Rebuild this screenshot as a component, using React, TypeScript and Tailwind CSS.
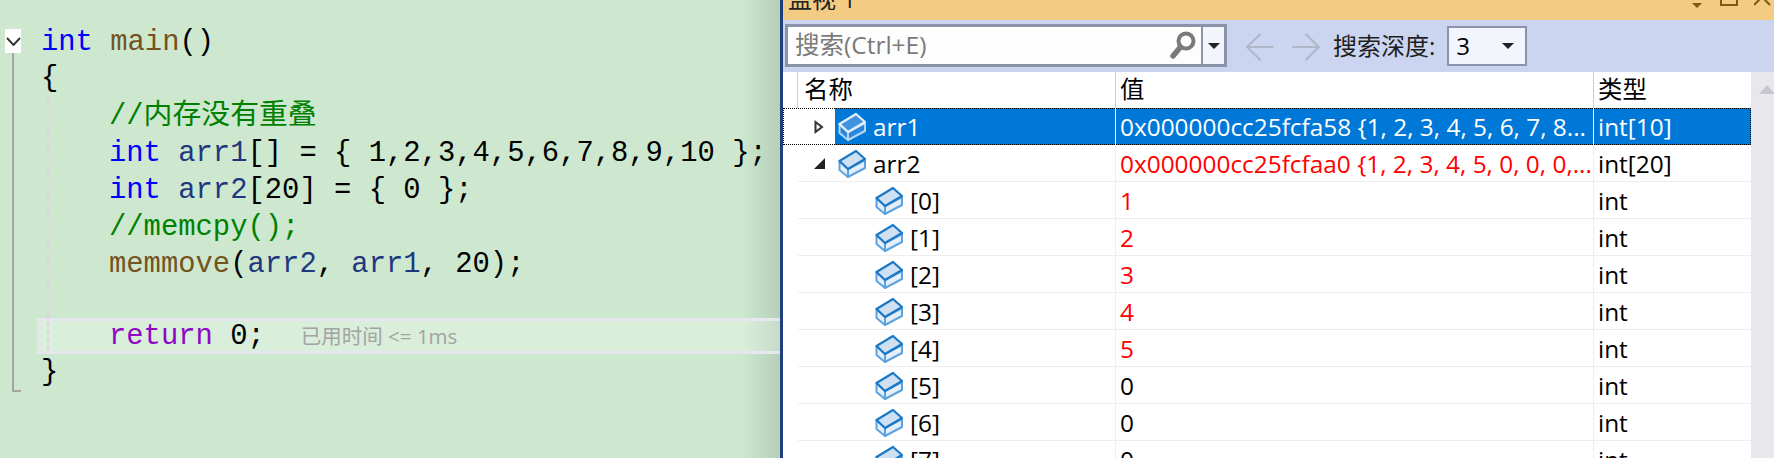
import { ArrowLeft, ArrowRight } from "lucide-react"

const uiFont = "font-['Open_Sans','Noto_Sans_CJK_SC',sans-serif]"
const codeFont = "font-['Liberation_Mono','Noto_Sans_CJK_SC',monospace]"

function VarIcon({ selected = false }: { selected?: boolean }) {
  const top = selected ? "#3f93e0" : "#cfe0f3"
  const side = selected ? "#2b86dc" : "#e6eff9"
  const strokeA = selected ? "#e4f0fb" : "#1a78c6"
  const strokeB = selected ? "#b5d7f5" : "#5aa3e0"
  return (
    <svg width="28" height="29" viewBox="0 0 28 29" fill="none" className="shrink-0">
      <path d="M1.5 12 L10 20 V28 L1.5 21 Z" fill={side} stroke={strokeB} strokeWidth="2" strokeLinejoin="round" />
      <path d="M10 20 L27 11 V19 L10 28 Z" fill={side} stroke={strokeB} strokeWidth="2" strokeLinejoin="round" />
      <path d="M1.5 12 L18 2 L27 10 L10 20 Z" fill={top} stroke={strokeA} strokeWidth="2.2" strokeLinejoin="round" />
    </svg>
  )
}

type RowData = {
  name: string
  value: string
  type: string
  changed?: boolean
  selected?: boolean
  depth?: number
  arrow?: "open" | "closed"
}

const rows: RowData[] = [
  { name: "arr1", value: "0x000000cc25fcfa58 {1, 2, 3, 4, 5, 6, 7, 8...", type: "int[10]", selected: true, arrow: "closed" },
  { name: "arr2", value: "0x000000cc25fcfaa0 {1, 2, 3, 4, 5, 0, 0, 0,...", type: "int[20]", changed: true, arrow: "open" },
  { name: "[0]", value: "1", type: "int", changed: true, depth: 1 },
  { name: "[1]", value: "2", type: "int", changed: true, depth: 1 },
  { name: "[2]", value: "3", type: "int", changed: true, depth: 1 },
  { name: "[3]", value: "4", type: "int", changed: true, depth: 1 },
  { name: "[4]", value: "5", type: "int", changed: true, depth: 1 },
  { name: "[5]", value: "0", type: "int", depth: 1 },
  { name: "[6]", value: "0", type: "int", depth: 1 },
  { name: "[7]", value: "0", type: "int", depth: 1 },
]

function WatchRow({ row }: { row: RowData }) {
  const sel = row.selected
  const border = sel ? "" : "border-b border-[#eeeeee]"
  return (
    <div className={`flex h-[37px] shrink-0 text-[24.4px] leading-[37px] ${sel ? "outline-1 -outline-offset-1 outline-dotted outline-black" : ""}`}>
      <div className="w-[15px] shrink-0" />
      <div className={`flex w-[317px] shrink-0 ${border}`}>
        <div className={`flex shrink-0 items-center pl-[16px] ${row.depth ? "w-[74px]" : "w-[37px]"}`}>
          {row.arrow === "closed" && (
            <svg width="10" height="14" viewBox="0 0 10 14">
              <path d="M1.5 2 L8 7 L1.5 12 Z" fill="none" stroke="#333" strokeWidth="2" />
            </svg>
          )}
          {row.arrow === "open" && (
            <svg width="11" height="11" viewBox="0 0 11 11">
              <path d="M11 0 V11 H0 Z" fill="#222" />
            </svg>
          )}
        </div>
        <div className={`flex flex-1 items-center gap-[7px] pl-[3px] ${sel ? "bg-[#0078d7] text-white" : "text-black"}`}>
          <VarIcon selected={sel} />
          <span>{row.name}</span>
        </div>
      </div>
      <div className={`w-[478px] shrink-0 overflow-hidden whitespace-nowrap border-l pl-[4px] ${sel ? "border-white bg-[#0078d7] text-white" : `border-[#eeeeee] ${row.changed ? "text-[#ff0000]" : "text-black"}`} ${border}`}>
        {row.value}
      </div>
      <div className={`w-[158px] shrink-0 border-l pl-[4px] ${sel ? "border-white bg-[#0078d7] text-white" : "border-[#eeeeee] text-black"} ${border}`}>
        {row.type}
      </div>
    </div>
  )
}

function Editor() {
  const guide = "border-l-2 border-dashed border-[#dcd5de] pl-[60px]"
  return (
    <div className={`flex h-[458px] w-[780px] shrink-0 bg-linear-to-r from-[#cde8cf] from-95% to-[#b6cfb9] text-[28.85px] leading-[37px] text-black ${codeFont}`}>
      <div className="flex w-[37px] shrink-0 flex-col pl-[5px] pt-[29px]">
        <div className="flex h-[24px] w-[16px] items-center justify-center bg-white">
          <svg width="15" height="9" viewBox="0 0 15 9">
            <path d="M1 1 L7.5 8 L14 1" fill="none" stroke="#333" strokeWidth="1.9" />
          </svg>
        </div>
        <div className="ml-[7px] h-[339px] w-[9px] border-b-[2px] border-l-[2px] border-[#a5a5a5]" />
      </div>
      <div className="flex-1 whitespace-pre pt-[24px]">
        <div className="h-[36px] pl-[4px]">
          <span className="text-[#0000ff]">int</span> <span className="text-[#74531f]">main</span>()
        </div>
        <div className="h-[38px] pl-[4px]">{"{"}</div>
        <div className="ml-[10px]">
          <div className={`h-[37px] ${guide} text-[#008000]`}>//内存没有重叠</div>
          <div className={`h-[37px] ${guide}`}>
            <span className="text-[#0000ff]">int</span> <span className="text-[#1f377f]">arr1</span>[] = {"{"} 1,2,3,4,5,6,7,8,9,10 {"};"}
          </div>
          <div className={`h-[37px] ${guide}`}>
            <span className="text-[#0000ff]">int</span> <span className="text-[#1f377f]">arr2</span>[20] = {"{"} 0 {"};"}
          </div>
          <div className={`h-[37px] ${guide} text-[#008000]`}>//memcpy();</div>
          <div className={`h-[37px] ${guide}`}>
            <span className="text-[#74531f]">memmove</span>(<span className="text-[#1f377f]">arr2</span>, <span className="text-[#1f377f]">arr1</span>, 20);
          </div>
          <div className={`h-[35px] ${guide}`} />
        </div>
        <div className="h-[36px] border-[3px] border-r-0 border-[#e6e6ee] bg-white/25 pl-[7px]">
          <div className={`flex h-[30px] items-center pt-[1px] ${guide}`}>
            <span className="text-[#8f08c4]">return</span>
            <span> 0;</span>
            <span className={`ml-[36px] text-[20.5px] text-[#a3a3a3] ${uiFont}`}>已用时间 &lt;= 1ms</span>
          </div>
        </div>
        <div className="h-[37px] pl-[4px]">{"}"}</div>
      </div>
    </div>
  )
}

function Toolbar() {
  return (
    <div className="flex h-[52px] shrink-0 items-start bg-[#ccd5f0] pl-[2px] pt-[4px]">
      <div className="flex h-[43px] w-[442px] shrink-0 border-[3px] border-[#8a93a8] bg-[#fdfdfd]">
        <div className="flex-1 pl-[7px] text-[24.5px] leading-[36px] text-[#7a7a7a]">搜索(Ctrl+E)</div>
        <div className="flex w-[36px] items-center justify-center pl-[2px] pr-[2px]">
          <svg width="26" height="30" viewBox="0 0 26 30" fill="none">
            <circle cx="16" cy="10" r="7.5" stroke="#7a7a7a" strokeWidth="4" />
            <path d="M10.5 16 L3 25" stroke="#7a7a7a" strokeWidth="5.5" strokeLinecap="round" />
          </svg>
        </div>
        <div className="flex w-[23px] items-center justify-center border-l-[2px] border-[#8a93a8] bg-[#f3f5fd]">
          <div className="h-0 w-0 border-x-[6px] border-t-[6px] border-x-transparent border-t-[#222]" />
        </div>
      </div>
      <div className="flex h-[46px] items-center gap-[2px] pl-[11px] text-[#aeb6c8]">
        <ArrowLeft size={44} strokeWidth={1.1} />
        <ArrowRight size={44} strokeWidth={1.1} />
      </div>
      <div className="h-[43px] pl-[5px] text-[24px] leading-[43px] text-[#1e1e1e]">搜索深度:</div>
      <div className="ml-[12px] mt-[2px] flex h-[40px] w-[80px] items-center justify-between border-[2px] border-[#8a93a8] bg-[#f3f5fd] pl-[7px] pr-[11px] text-[24px] text-black">
        <span>3</span>
        <div className="h-0 w-0 border-x-[6px] border-t-[6px] border-x-transparent border-t-[#222]" />
      </div>
    </div>
  )
}

function WatchPanel() {
  return (
    <div className={`flex h-[458px] flex-1 flex-col border-l-[3px] border-[#1f3f7f] bg-white ${uiFont}`}>
      <div className="relative h-[20px] shrink-0 overflow-hidden bg-[#f3cb82]">
        <div className="absolute -top-[16px] left-[5px] text-[24px] leading-[30px] text-[#222]">监视 1</div>
        <div className="absolute -top-[14px] right-[4px] flex items-end">
          <div className="mb-[-2px] h-0 w-0 border-x-[5px] border-t-[5px] border-x-transparent border-t-[#7d5a10]" />
          <div className="ml-[18px] h-[20px] w-[18px] border-2 border-[#7d5a10]" />
          <svg width="17" height="20" viewBox="0 0 17 20" className="ml-[16px]">
            <path d="M0 3 L16 19 M16 3 L0 19" stroke="#7d5a10" strokeWidth="2" />
          </svg>
        </div>
      </div>
      <Toolbar />
      <div className="flex min-h-0 flex-1">
        <div className="w-[968px] shrink-0 overflow-hidden">
          <div className="flex h-[36px] text-[24.4px] leading-[33px] text-black">
            <div className="w-[15px] shrink-0 border-r border-[#c5cbe6]" />
            <div className="w-[317px] shrink-0 pl-[6px]">名称</div>
            <div className="w-[478px] shrink-0 border-l border-[#c5cbe6] pl-[4px]">值</div>
            <div className="w-[158px] shrink-0 border-l border-[#c5cbe6] pl-[4px]">类型</div>
          </div>
          {rows.map((row) => (
            <WatchRow key={row.name} row={row} />
          ))}
        </div>
        <div className="flex flex-1 justify-start overflow-hidden bg-[#e8e8ec] pl-[8px] pt-[13px]">
          <div className="h-0 w-0 shrink-0 border-x-[8px] border-b-[9px] border-x-transparent border-b-[#c6c6d0]" />
        </div>
      </div>
    </div>
  )
}

export default function App() {
  return (
    <div className="flex h-[458px] w-[1774px] overflow-hidden">
      <Editor />
      <WatchPanel />
    </div>
  )
}
